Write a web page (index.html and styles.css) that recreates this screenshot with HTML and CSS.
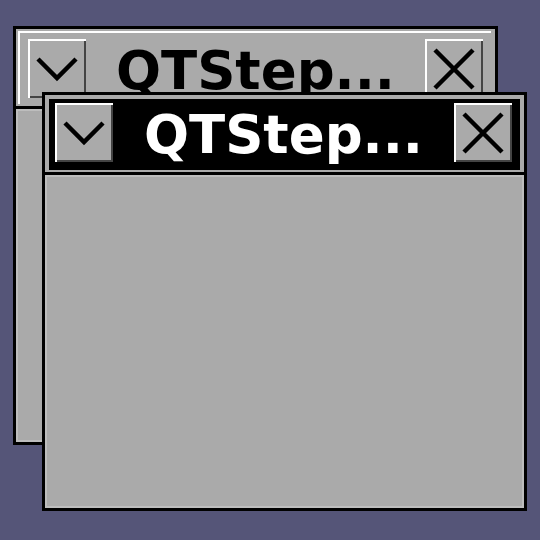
FILE: index.html
```html
<!DOCTYPE html>
<html>
<head>
<meta charset="utf-8">
<link rel="stylesheet" href="styles.css">
</head>
<body>
<div class="desk">
  <div class="win back">
    <div class="frame">
      <div class="bar">
        <div class="btn"><svg viewBox="0 0 58 59" width="58" height="59"><polyline points="10,20 29,39 48,20" fill="none" stroke="#000" stroke-width="4.5"/></svg></div>
        <div class="title">QTStep...</div>
        <div class="btn"><svg viewBox="0 0 58 59" width="58" height="59"><path d="M10 11 L48 49 M48 11 L10 49" fill="none" stroke="#000" stroke-width="4.5"/></svg></div>
      </div>
    </div>
    <div class="content"></div>
  </div>
  <div class="win front">
    <div class="frame">
      <div class="bar">
        <div class="btn"><svg viewBox="0 0 58 59" width="58" height="59"><polyline points="10,20 29,39 48,20" fill="none" stroke="#000" stroke-width="4.5"/></svg></div>
        <div class="title">QTStep...</div>
        <div class="btn"><svg viewBox="0 0 58 59" width="58" height="59"><path d="M10 11 L48 49 M48 11 L10 49" fill="none" stroke="#000" stroke-width="4.5"/></svg></div>
      </div>
    </div>
    <div class="content"></div>
  </div>
</div>
</body>
</html>
```
FILE: styles.css
```css
html, body {
  margin: 0;
  padding: 0;
}
body {
  background: #555578;
  width: 540px;
  height: 540px;
  overflow: hidden;
  font-family: "DejaVu Sans", "Liberation Sans", sans-serif;
}
.desk {
  position: relative;
  width: 540px;
  height: 540px;
}
.win {
  position: absolute;
  box-sizing: border-box;
  width: 485px;
  height: 419px;
  border: 3px solid #000;
  background: #aaaaaa;
  display: flex;
  flex-direction: column;
}
.back {
  left: 13px;
  top: 26px;
}
.front {
  left: 42px;
  top: 92px;
}
.frame {
  padding: 4px 4px 2px 4px;
  background: #aaaaaa;
  border-bottom: 3px solid #000;
}
.back .frame {
  padding: 2px 4px 2px 2px;
}
.bar {
  box-sizing: border-box;
  height: 71px;
  padding: 4px 8px 8px 6px;
  display: flex;
  align-items: flex-start;
}
.back .bar {
  height: 73px;
  padding: 8px 8px 6px 10px;
  background: #aaaaaa;
  box-shadow: inset 2px 2px 0 #ffffff;
}
.front .bar {
  background: #000;
}
.btn {
  width: 58px;
  height: 59px;
  flex: none;
  background: #aaaaaa;
  box-shadow: inset 2px 2px 0 #ffffff, inset -2px -2px 0 #444444;
}
.btn svg {
  display: block;
}
.title {
  flex: 1;
  height: 59px;
  text-align: center;
  font-weight: bold;
  font-size: 53px;
  line-height: 64px;
  white-space: nowrap;
  overflow: visible;
}
.back .title {
  color: #000;
}
.front .title {
  color: #fff;
}
.content {
  flex: 1;
  background: #aaaaaa;
  box-shadow: inset 0 0 0 2px #bdbdbd;
}
```
